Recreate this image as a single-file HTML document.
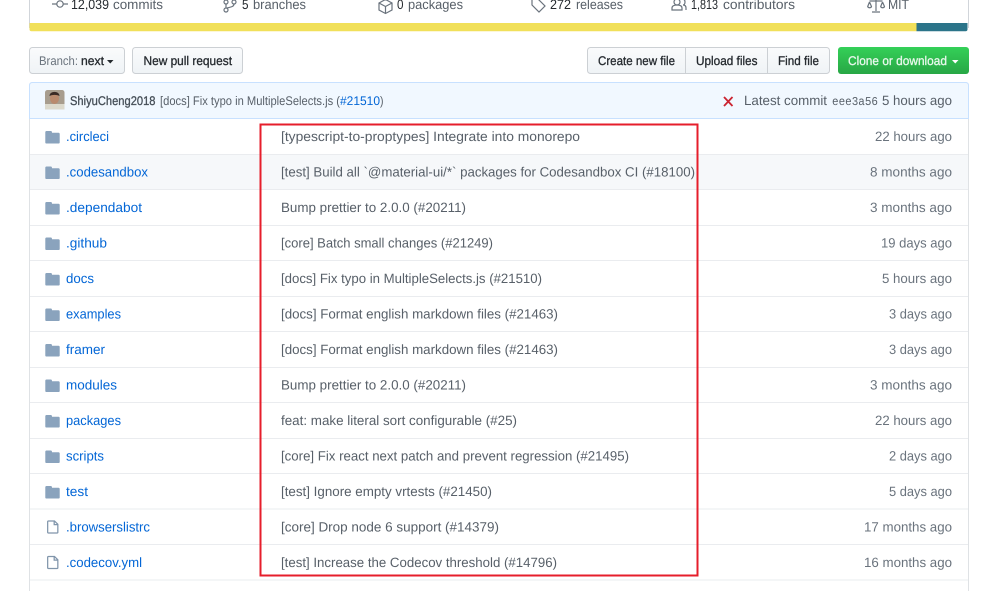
<!DOCTYPE html>
<html><head><meta charset="utf-8"><style>
html,body{margin:0;padding:0;background:#fff;width:1000px;height:591px;overflow:hidden}
svg{display:block;filter:blur(.35px)}
text{font-family:"Liberation Sans",sans-serif;font-size:13.5px;text-rendering:geometricPrecision}
.n{fill:#0366d6}.c{fill:#586069}.t{fill:#6a737d}.d{fill:#24292e}
.b{stroke:currentColor;stroke-width:.3px;paint-order:stroke}
.s{font-size:12.500px}
.ic{fill:none;stroke:#6a737d;stroke-width:1.2}
</style></head><body>
<svg width="1000" height="591" viewBox="0 0 1000 591" xmlns="http://www.w3.org/2000/svg">
<defs>
<linearGradient id="g1" x1="0" y1="0" x2="0" y2="1"><stop offset="0" stop-color="#fafbfc"/><stop offset="1" stop-color="#eff3f6"/></linearGradient>
<linearGradient id="g2" x1="0" y1="0" x2="0" y2="1"><stop offset="0" stop-color="#34d058"/><stop offset="1" stop-color="#28a745"/></linearGradient>
<symbol id="fo" viewBox="0 0 15 13" overflow="visible"><path fill="#8aa3bd" d="M0 1.200C0 .5.500 0 1.200 0h4.600c.6 0 1 .4 1.100 1l.1.800h6.800c.7 0 1.200.5 1.200 1.200v8.800c0 .7-.5 1.200-1.200 1.200H1.200C.5 13 0 12.500 0 11.800z"/></symbol>
<symbol id="fi" viewBox="0 0 12 14" overflow="visible"><path fill="none" stroke="#8095ab" stroke-width="1.300" d="M.7 1.500c0-.5.3-.8.8-.8h6.300l3.500 3.500v8.300c0 .5-.3.8-.8.800h-9c-.5 0-.8-.3-.8-.8zM7.500 1v3.500h3.500"/></symbol>
</defs>
<rect width="1000" height="591" fill="#fff"/>

<!-- top numbers box -->
<path d="M29.500 0V28M968.500 0V28" stroke="#d1d5da" fill="none"/>
<path d="M52 4h5M63 4h5" stroke="#6a737d" stroke-width="1.300"/><circle cx="60" cy="4" r="3.200" class="ic"/>
<text x="71" y="9" class="d" color="#24292e" textLength="38" lengthAdjust="spacingAndGlyphs">12,039</text>
<text x="113" y="9" class="c" textLength="50" lengthAdjust="spacingAndGlyphs">commits</text>
<g class="ic"><circle cx="226" cy="2" r="2"/><circle cx="226" cy="10" r="2"/><circle cx="234" cy="2" r="2"/><path d="M226 4v4M234 4c0 3-4 3-7 4"/></g>
<text x="242" y="9" class="d" textLength="6.500" lengthAdjust="spacingAndGlyphs">5</text>
<text x="253" y="9" class="c" textLength="53" lengthAdjust="spacingAndGlyphs">branches</text>
<g class="ic"><path d="M379 3l6.500-3.500L392 3v7l-6.500 3.500L379 10zM379 3l6.500 3.500L392 3M385.500 6.500v7"/></g>
<text x="397" y="9" class="d" textLength="6.500" lengthAdjust="spacingAndGlyphs">0</text>
<text x="408" y="9" class="c" textLength="55" lengthAdjust="spacingAndGlyphs">packages</text>
<g class="ic"><path d="M532 -1v6l7 7 6-6-7-7z"/></g>
<text x="550" y="9" class="d" textLength="21" lengthAdjust="spacingAndGlyphs">272</text>
<text x="576" y="9" class="c" textLength="47" lengthAdjust="spacingAndGlyphs">releases</text>
<g class="ic"><circle cx="677" cy="2" r="3"/><path d="M672 10v-2c0-2 2-3 5-3s5 1 5 3v2zM682 -1c2 0 3 1 3 3s-1 3-2 3c2 0 3 1 3 3v2"/></g>
<text x="691" y="9" class="d" textLength="27" lengthAdjust="spacingAndGlyphs">1,813</text>
<text x="723" y="9" class="c" textLength="72" lengthAdjust="spacingAndGlyphs">contributors</text>
<g class="ic"><path d="M869.500 1h13M876 -1v12M872 12h8M869.500 2l-1.800 4.500a2 1.800 0 0 0 3.800 0L869.500 2M882.500 2l-1.800 4.500a2 1.800 0 0 0 3.800 0L882.500 2"/></g>
<text x="888" y="9" class="c" textLength="21" lengthAdjust="spacingAndGlyphs">MIT</text>

<!-- language bar -->
<path d="M29.500 23H916.500V31.300H31.500Q29.500 31.300 29.500 29.300Z" fill="#f1e05a"/>
<path d="M916.500 23H967.500V29.300Q967.500 31.300 965.500 31.300H916.500Z" fill="#2b7489"/>

<!-- buttons -->
<rect x="29.500" y="47.500" width="95" height="26" rx="3" fill="url(#g1)" stroke="#ccd0d4"/>
<text x="39" y="65" class="t s" textLength="39" lengthAdjust="spacingAndGlyphs">Branch:</text>
<text x="81" y="65" class="d b s" color="#24292e" textLength="23" lengthAdjust="spacingAndGlyphs">next</text>
<path d="M107 60h6.500l-3.250 3.500z" fill="#24292e"/>
<rect x="132.500" y="47.500" width="110" height="26" rx="3" fill="url(#g1)" stroke="#ccd0d4"/>
<text x="143.500" y="65" class="d b s" color="#24292e" textLength="88.500" lengthAdjust="spacingAndGlyphs">New pull request</text>

<rect x="587.500" y="47.500" width="242" height="26" rx="3" fill="url(#g1)" stroke="#ccd0d4"/>
<path d="M685.500 47.500v26M767.500 47.500v26" stroke="#ccd0d4"/>
<text x="598" y="65" class="d b s" color="#24292e" textLength="77" lengthAdjust="spacingAndGlyphs">Create new file</text>
<text x="696" y="65" class="d b s" color="#24292e" textLength="61.500" lengthAdjust="spacingAndGlyphs">Upload files</text>
<text x="778" y="65" class="d b s" color="#24292e" textLength="41" lengthAdjust="spacingAndGlyphs">Find file</text>
<rect x="838" y="47" width="131" height="27" rx="3" fill="url(#g2)"/>
<text x="848" y="65" class="b s" color="#e9f8ec" fill="#e9f8ec" textLength="99" lengthAdjust="spacingAndGlyphs">Clone or download</text>
<path d="M952 60h6.500l-3.250 3.500z" fill="#fff"/>

<!-- file table -->
<rect x="29.500" y="82.500" width="939" height="520" rx="3" fill="#fff" stroke="#dfe2e5"/>
<path d="M29.500 118.500V85.500Q29.500 82.500 32.500 82.500H965.500Q968.500 82.500 968.500 85.500V118.500Z" fill="#f1f8ff" stroke="#c8e1ff"/>
<rect x="45" y="90" width="19.500" height="19.500" rx="2.500" fill="#a89d8e"/>
<rect x="45" y="104" width="19.500" height="5.500" fill="#dcd9cc"/>
<ellipse cx="54.500" cy="98.500" rx="4.500" ry="5.500" fill="#b98a6e"/>
<path d="M49.500 96c0-5.500 10-5.500 10 0-3-1.500-7-1.500-10 0z" fill="#3a2a25"/>
<text x="70" y="105" class="b s" color="#444d56" fill="#444d56" textLength="85.500" lengthAdjust="spacingAndGlyphs">ShiyuCheng2018</text>
<text x="160" y="105" class="c s" textLength="180" lengthAdjust="spacingAndGlyphs">[docs] Fix typo in MultipleSelects.js (</text>
<text x="340" y="105" class="n s" textLength="40" lengthAdjust="spacingAndGlyphs">#21510</text>
<text x="380" y="105" class="c s" textLength="3.500" lengthAdjust="spacingAndGlyphs">)</text>
<path d="M724 97l8.500 9M732.500 97l-8.500 9" stroke="#cb2431" stroke-width="1.800" fill="none"/>
<text x="744" y="105" class="c" textLength="83" lengthAdjust="spacingAndGlyphs">Latest commit</text>
<text x="832" y="105" class="c" style="font-family:'Liberation Mono',monospace;font-size:12px" textLength="46" lengthAdjust="spacingAndGlyphs">eee3a56</text>
<text x="882" y="105" class="c" textLength="70" lengthAdjust="spacingAndGlyphs">5 hours ago</text>

<rect x="30" y="154.500" width="938" height="35" fill="#f6f8fa"/>
<path stroke="#eaecef" fill="none" d="M30 154.500H968M30 189.500H968M30 225.500H968M30 260.500H968M30 296.500H968M30 331.500H968M30 367.500H968M30 402.500H968M30 438.500H968M30 473.500H968M30 509H968M30 544.500H968M30 580H968"/>

<use href="#fo" x="45" y="131" width="15" height="12.500"/>
<use href="#fo" x="45" y="166.500" width="15" height="12.500"/>
<use href="#fo" x="45" y="202" width="15" height="12.500"/>
<use href="#fo" x="45" y="237.500" width="15" height="12.500"/>
<use href="#fo" x="45" y="273" width="15" height="12.500"/>
<use href="#fo" x="45" y="308.500" width="15" height="12.500"/>
<use href="#fo" x="45" y="344" width="15" height="12.500"/>
<use href="#fo" x="45" y="379.500" width="15" height="12.500"/>
<use href="#fo" x="45" y="415" width="15" height="12.500"/>
<use href="#fo" x="45" y="450.500" width="15" height="12.500"/>
<use href="#fo" x="45" y="486" width="15" height="12.500"/>
<use href="#fi" x="47" y="520" width="11.500" height="14"/>
<use href="#fi" x="47" y="555.500" width="11.500" height="14"/>

<g>
<text x="66" y="141" class="n" textLength="43" lengthAdjust="spacingAndGlyphs">.circleci</text>
<text x="66" y="176.500" class="n" textLength="82" lengthAdjust="spacingAndGlyphs">.codesandbox</text>
<text x="66" y="212" class="n" textLength="76" lengthAdjust="spacingAndGlyphs">.dependabot</text>
<text x="66" y="247.500" class="n" textLength="41" lengthAdjust="spacingAndGlyphs">.github</text>
<text x="66" y="283" class="n" textLength="28" lengthAdjust="spacingAndGlyphs">docs</text>
<text x="66" y="318.500" class="n" textLength="55" lengthAdjust="spacingAndGlyphs">examples</text>
<text x="66" y="354" class="n" textLength="39" lengthAdjust="spacingAndGlyphs">framer</text>
<text x="66" y="389.500" class="n" textLength="51" lengthAdjust="spacingAndGlyphs">modules</text>
<text x="66" y="425" class="n" textLength="55" lengthAdjust="spacingAndGlyphs">packages</text>
<text x="66" y="460.500" class="n" textLength="38" lengthAdjust="spacingAndGlyphs">scripts</text>
<text x="66" y="496" class="n" textLength="22" lengthAdjust="spacingAndGlyphs">test</text>
<text x="66" y="531.500" class="n" textLength="84" lengthAdjust="spacingAndGlyphs">.browserslistrc</text>
<text x="66" y="567" class="n" textLength="76" lengthAdjust="spacingAndGlyphs">.codecov.yml</text>
</g>
<g>
<text x="281" y="141" class="c" textLength="299" lengthAdjust="spacingAndGlyphs">[typescript-to-proptypes] Integrate into monorepo</text>
<text x="281" y="176.500" class="c" textLength="414" lengthAdjust="spacingAndGlyphs">[test] Build all `@material-ui/*` packages for Codesandbox CI (#18100)</text>
<text x="281" y="212" class="c" textLength="185" lengthAdjust="spacingAndGlyphs">Bump prettier to 2.0.0 (#20211)</text>
<text x="281" y="247.500" class="c" textLength="212" lengthAdjust="spacingAndGlyphs">[core] Batch small changes (#21249)</text>
<text x="281" y="283" class="c" textLength="261" lengthAdjust="spacingAndGlyphs">[docs] Fix typo in MultipleSelects.js (#21510)</text>
<text x="281" y="318.500" class="c" textLength="277" lengthAdjust="spacingAndGlyphs">[docs] Format english markdown files (#21463)</text>
<text x="281" y="354" class="c" textLength="277" lengthAdjust="spacingAndGlyphs">[docs] Format english markdown files (#21463)</text>
<text x="281" y="389.500" class="c" textLength="185" lengthAdjust="spacingAndGlyphs">Bump prettier to 2.0.0 (#20211)</text>
<text x="281" y="425" class="c" textLength="236" lengthAdjust="spacingAndGlyphs">feat: make literal sort configurable (#25)</text>
<text x="281" y="460.500" class="c" textLength="348" lengthAdjust="spacingAndGlyphs">[core] Fix react next patch and prevent regression (#21495)</text>
<text x="281" y="496" class="c" textLength="211" lengthAdjust="spacingAndGlyphs">[test] Ignore empty vrtests (#21450)</text>
<text x="281" y="531.500" class="c" textLength="218" lengthAdjust="spacingAndGlyphs">[core] Drop node 6 support (#14379)</text>
<text x="281" y="567" class="c" textLength="276" lengthAdjust="spacingAndGlyphs">[test] Increase the Codecov threshold (#14796)</text>
</g>
<g>
<text x="875" y="141" class="t" textLength="77" lengthAdjust="spacingAndGlyphs">22 hours ago</text>
<text x="870" y="176.500" class="t" textLength="82" lengthAdjust="spacingAndGlyphs">8 months ago</text>
<text x="870" y="212" class="t" textLength="82" lengthAdjust="spacingAndGlyphs">3 months ago</text>
<text x="881" y="247.500" class="t" textLength="71" lengthAdjust="spacingAndGlyphs">19 days ago</text>
<text x="882" y="283" class="t" textLength="70" lengthAdjust="spacingAndGlyphs">5 hours ago</text>
<text x="889" y="318.500" class="t" textLength="63" lengthAdjust="spacingAndGlyphs">3 days ago</text>
<text x="889" y="354" class="t" textLength="63" lengthAdjust="spacingAndGlyphs">3 days ago</text>
<text x="870" y="389.500" class="t" textLength="82" lengthAdjust="spacingAndGlyphs">3 months ago</text>
<text x="875" y="425" class="t" textLength="77" lengthAdjust="spacingAndGlyphs">22 hours ago</text>
<text x="889" y="460.500" class="t" textLength="63" lengthAdjust="spacingAndGlyphs">2 days ago</text>
<text x="889" y="496" class="t" textLength="63" lengthAdjust="spacingAndGlyphs">5 days ago</text>
<text x="864" y="531.500" class="t" textLength="88" lengthAdjust="spacingAndGlyphs">17 months ago</text>
<text x="864" y="567" class="t" textLength="88" lengthAdjust="spacingAndGlyphs">16 months ago</text>
</g>

<!-- red highlight -->
<rect x="260.500" y="124.500" width="437" height="451" fill="none" stroke="#e61e2b" stroke-width="2"/>
</svg>
</body></html>
